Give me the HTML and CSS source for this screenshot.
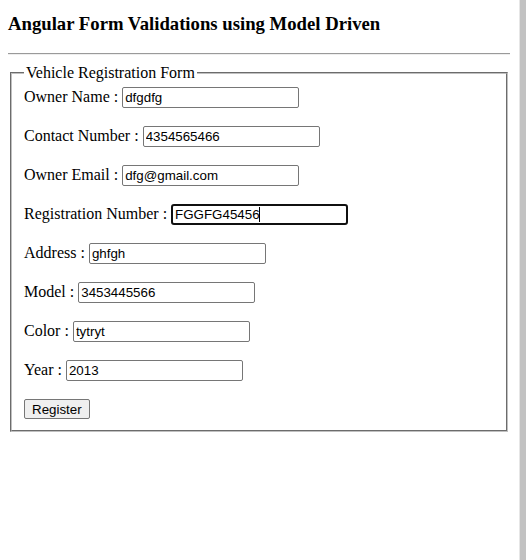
FILE: index.html
```html
<!DOCTYPE html>
<html>
<head>
<meta charset="utf-8">
<link rel="stylesheet" href="styles.css">
</head>
<body>
<div class="shell">
  <main class="page">
    <h3 class="title">Angular Form Validations using Model Driven</h3>
    <hr class="rule">
    <form class="form">
      <fieldset class="box">
        <legend class="legend">Vehicle Registration Form</legend>
        <div class="rows">
          <div class="row"><span class="label">Owner Name :</span><input class="field" type="text" value="dfgdfg"></div>
          <div class="row"><span class="label">Contact Number :</span><input class="field" type="text" value="4354565466"></div>
          <div class="row"><span class="label">Owner Email :</span><input class="field" type="text" value="dfg@gmail.com"></div>
          <div class="row"><span class="label">Registration Number :</span><span class="focus-wrap"><input class="field field-focus" type="text" value="FGGFG45456"><span class="caret"></span></span></div>
          <div class="row"><span class="label">Address :</span><input class="field" type="text" value="ghfgh"></div>
          <div class="row"><span class="label">Model :</span><input class="field" type="text" value="3453445566"></div>
          <div class="row"><span class="label">Color :</span><input class="field" type="text" value="tytryt"></div>
          <div class="row"><span class="label">Year :</span><input class="field" type="text" value="2013"></div>
          <div class="row"><button class="btn" type="button">Register</button></div>
        </div>
      </fieldset>
    </form>
  </main>
  <div class="rail"></div>
</div>
</body>
</html>
```

FILE: styles.css
```css
html, body {
  margin: 0;
  padding: 0;
  background: #ffffff;
}

body {
  font-family: "Liberation Serif", "Times New Roman", serif;
  font-size: 16px;
  color: #000;
}

.shell {
  display: flex;
  min-height: 560px;
}

.page {
  width: 502px;
  padding: 13px 8px 8px 8px;
  flex: none;
}

.rail {
  flex: 1;
  margin-left: 1px;
  border-left: 1px solid #e6e6e6;
  background: #c2c2c2;
}

.title {
  margin: 0 0 18px 0;
  font-size: 18.72px;
  font-weight: bold;
  line-height: 22px;
}

.rule {
  margin: 0 0 9px 0;
  border: none;
  border-top: 1px solid #9a9a9a;
  border-bottom: 1px solid #eeeeee;
  height: 0;
}

.form {
  margin: 0;
}

.box {
  margin: 0 2px;
  padding: 5px 12px 10px 12px;
  border: 2px groove #c0c0c0;
  min-width: 0;
}

.legend {
  padding: 0 2px;
  font-size: 16px;
  line-height: 18px;
}

.rows {
  display: flex;
  flex-direction: column;
  gap: 18px;
}

.row {
  display: flex;
  align-items: baseline;
  height: 21px;
}

.label {
  margin-right: 4px;
  white-space: pre;
}

.field {
  box-sizing: border-box;
  width: 177px;
  height: 21px;
  margin: 0;
  padding: 1px 2px;
  border: 1px solid #767676;
  border-radius: 2px;
  font-family: "Liberation Sans", Arial, sans-serif;
  font-size: 13.33px;
  color: #000;
  background: #fff;
  outline: none;
}

.focus-wrap {
  position: relative;
  display: inline-block;
}

.field-focus {
  border: 2px solid #101010;
  border-radius: 3px;
  padding: 0 2px;
}

.caret {
  position: absolute;
  left: 88px;
  top: 3px;
  width: 1px;
  height: 15px;
  background: #000;
}

.btn {
  box-sizing: border-box;
  height: 20px;
  margin: 0;
  padding: 1px 7px;
  border: 1px solid #767676;
  border-radius: 2px;
  background: #efefef;
  font-family: "Liberation Sans", Arial, sans-serif;
  font-size: 13.33px;
  color: #000;
}
```
